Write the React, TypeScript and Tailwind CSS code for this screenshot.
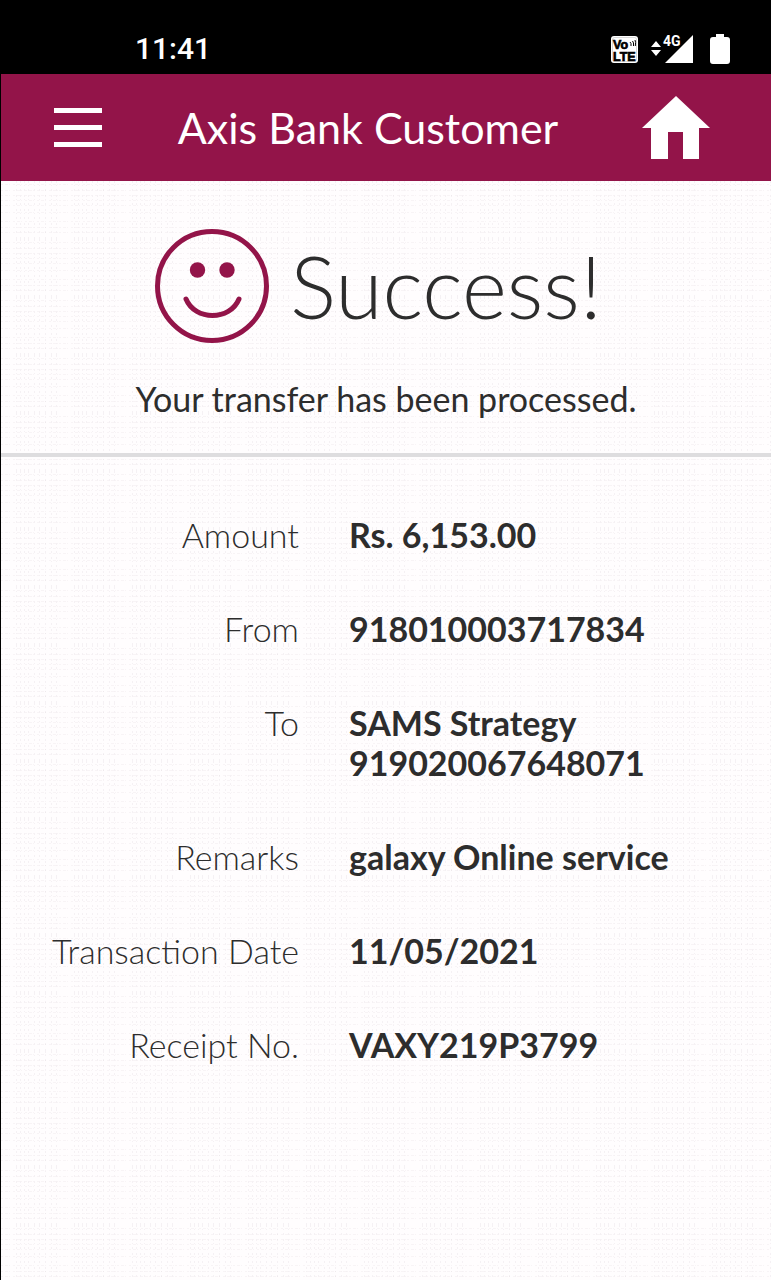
type Row = { label: string; lines: string[] };

const rows: Row[] = [
  { label: "Amount", lines: ["Rs. 6,153.00"] },
  { label: "From", lines: ["918010003717834"] },
  { label: "To", lines: ["SAMS Strategy", "919020067648071"] },
  { label: "Remarks", lines: ["galaxy Online service"] },
  { label: "Transaction Date", lines: ["11/05/2021"] },
  { label: "Receipt No.", lines: ["VAXY219P3799"] },
];

function StatusBar() {
  return (
    <div className="flex h-[74px] items-end justify-between bg-black pr-[41px] pb-2 pl-[135px] text-white">
      <time className="font-['Roboto',sans-serif] text-[30px] leading-[34px] font-medium">11:41</time>
      <div className="flex h-[34px] items-center">
        <svg className="h-[27px] w-[27px]" viewBox="0 0 27 27" role="img" aria-label="VoLTE">
          <rect width="27" height="27" rx="3" fill="#fff" />
          <rect x="1.500" y="1.500" width="24" height="24" rx="2" fill="none" stroke="#000" strokeOpacity="0.25" strokeWidth="0.6" />
          <g fill="#000" stroke="#000" strokeWidth="0.7" fontFamily="Liberation Sans, sans-serif" fontWeight="700" fontSize="12.500">
            <text x="2" y="13">Vo</text>
            <text x="2" y="24.500">LTE</text>
          </g>
          <path d="M19 6q1.500 1 1 4M21.500 5q1.500 1.500 1 5M24 4q1 2 .3 6" fill="none" stroke="#000" strokeWidth="1" />
        </svg>
        <svg className="ml-3 h-[32px] w-[44px]" viewBox="0 0 44 32" role="img" aria-label="4G signal">
          <path d="M1 14l5-6 5 6zM1 17h10l-5 6zM15 30 43 2v28z" fill="#fff" />
          <text x="13" y="13" fill="#fff" fontFamily="Roboto, sans-serif" fontWeight="700" fontSize="14">4G</text>
        </svg>
        <svg className="ml-[16px] h-[30px] w-[20px]" viewBox="0 0 20 30" role="img" aria-label="Battery full">
          <path d="M6 0h8v3h3q3 0 3 3v21q0 3-3 3H3q-3 0-3-3V6q0-3 3-3h3z" fill="#fff" />
        </svg>
      </div>
    </div>
  );
}

function Texture() {
  return (
    <svg className="pointer-events-none absolute inset-0 h-full w-full" aria-hidden="true">
      <defs>
        <pattern id="weave" width="58" height="58" patternUnits="userSpaceOnUse">
          <path
            d="M15.500 0v58M19.500 0v58M23.500 0v58M27.500 0v58M33.500 0v58M38.500 0v58M44.500 0v58M50.500 0v58M55.500 0v58"
            stroke="#80607a" strokeOpacity="0.08" strokeDasharray="2 2 1 3 2 4"
          />
          <path
            d="M0 3.500h58M0 9.500h58M0 14.500h58M0 19.500h58M0 24.500h58M0 31.500h58M0 40.500h58M0 46.500h58M0 51.500h58"
            stroke="#80607a" strokeOpacity="0.06" strokeDasharray="2 2 3 1 1 3"
          />
        </pattern>
      </defs>
      <rect width="100%" height="100%" fill="url(#weave)" />
    </svg>
  );
}

export default function App() {
  return (
    <div className="flex min-h-screen flex-col bg-black font-['Lato',sans-serif] text-[#2d2d2d]">
      <StatusBar />
      <div className="flex grow flex-col border-l border-black bg-[#fffdfe]">
        <header className="flex h-[107px] items-center justify-between bg-[#931449] pr-[61px] pl-[53px] text-white">
          <button type="button" aria-label="Menu" className="flex w-12 flex-col gap-3">
            <span className="h-[5px] bg-white" />
            <span className="h-[5px] bg-white" />
            <span className="h-[5px] bg-white" />
          </button>
          <h1 className="pr-2 text-[43px] leading-[52px]">Axis Bank Customer</h1>
          <a href="#home" aria-label="Home">
            <svg className="h-[63px] w-[68px]" viewBox="0 0 68 63" aria-hidden="true">
              <path d="M34 0 68 32H57v31H41V36H26v27H9V32H0z" fill="#fff" />
            </svg>
          </a>
        </header>
        <main className="relative grow pb-12">
          <Texture />
          <section className="relative border-b-4 border-[#dedddf] pt-[47px] pb-8 text-center">
            <div className="flex items-center justify-center gap-5 pr-4">
              <svg className="h-[116px] w-[116px]" viewBox="0 0 116 116" fill="none" role="img" aria-label="Smiley">
                <circle cx="58" cy="58" r="54.500" stroke="#931449" strokeWidth="5" />
                <circle cx="43.500" cy="42" r="7.700" fill="#931449" />
                <circle cx="73" cy="42" r="7.700" fill="#931449" />
                <path d="M32 71c9 22 44 22 53 0" stroke="#931449" strokeWidth="5" strokeLinecap="round" />
              </svg>
              <h2 className="text-[86px] leading-[104px] font-light">Success!</h2>
            </div>
            <p className="mt-8 text-[34px] leading-[45px]">Your transfer has been processed.</p>
          </section>
          <dl className="relative flex flex-col gap-[54px] pt-[58px] text-[34px] leading-[40px]">
            {rows.map((row) => (
              <div key={row.label} className="flex gap-[50px]">
                <dt className="w-[38.7%] shrink-0 text-right font-light">{row.label}</dt>
                <dd className="grow font-bold">
                  {row.lines.map((line) => (
                    <span key={line} className="block">{line}</span>
                  ))}
                </dd>
              </div>
            ))}
          </dl>
        </main>
      </div>
    </div>
  );
}
